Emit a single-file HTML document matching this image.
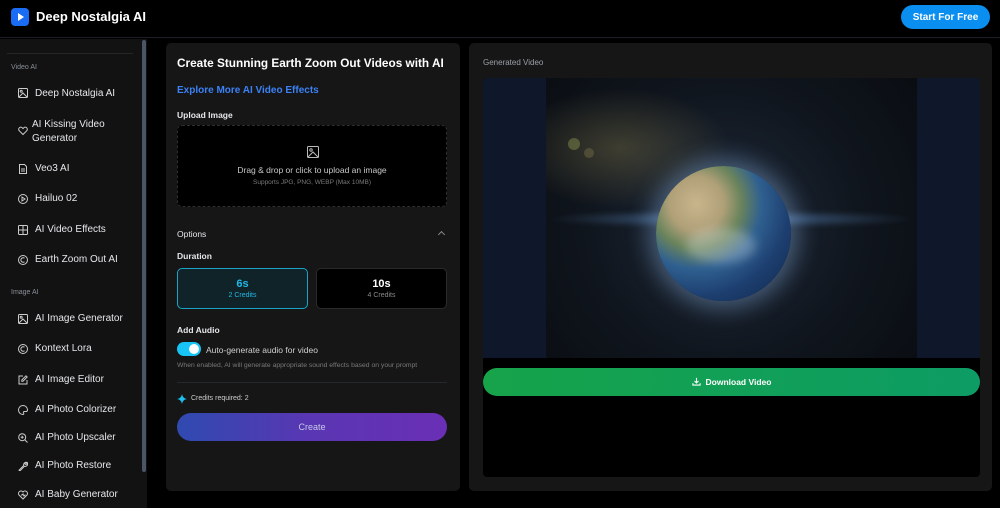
<!DOCTYPE html>
<html><head><meta charset="utf-8"><style>
*{margin:0;padding:0;box-sizing:border-box}
body{width:1000px;height:508px;background:#000;font-family:"Liberation Sans",sans-serif;color:#e5e7eb;overflow:hidden;position:relative}
.hdr{position:absolute;left:0;top:0;width:1000px;height:38px;background:#000;border-bottom:1px solid #1c1f26}
.logo{position:absolute;left:11px;top:8px;width:18px;height:18px;background:#1a6cf5;border-radius:4px}
.logo:after{content:"";position:absolute;left:7px;top:5px;border-left:6px solid #fff;border-top:4px solid transparent;border-bottom:4px solid transparent}
.brand{position:absolute;left:36px;top:9px;font-size:13px;font-weight:bold;color:#fff}
.start{position:absolute;left:901px;top:5px;width:89px;height:24px;border-radius:12px;background:#0a8ef0;color:#fff;font-size:10px;font-weight:bold;display:flex;align-items:center;justify-content:center}
.side{position:absolute;left:0;top:39px;width:147px;height:469px;background:#121212}
.sb{position:absolute;left:142px;top:40px;width:4px;height:432px;background:#4a5568;border-radius:2px}
.div{position:absolute;left:7px;top:53px;width:126px;height:1px;background:#262626}
.sec{position:absolute;left:11px;font-size:7px;color:#8a8f98}
.it{position:absolute;left:35px;font-size:10px;color:#e5e7eb}
.ic{position:absolute;left:18px;width:10px;height:10px}
.card{position:absolute;top:43px;height:448px;background:#161616;border-radius:5px}
.h1{position:absolute;left:177px;top:56px;font-size:11.8px;font-weight:bold;color:#fff}
.lnk{position:absolute;left:177px;top:85px;font-size:10px;color:#3b82f6;font-weight:bold}
.lbl{position:absolute;left:177px;font-size:8.5px;color:#e5e7eb;font-weight:bold}
.up{position:absolute;left:177px;top:125px;width:270px;height:82px;background:#000;border:1px dashed #2e2e2e;border-radius:5px;text-align:center}
.dur{position:absolute;top:268px;width:131px;height:41px;border-radius:5px;text-align:center}
.grad{position:absolute;left:177px;top:413px;width:270px;height:28px;border-radius:14px;background:linear-gradient(90deg,#2f4ab0,#5a36b3,#6a2fb5);color:#c7c9e8;font-size:9px;text-align:center;line-height:28px}
</style></head><body>
<div class="hdr"><div class="logo"></div><div class="brand">Deep Nostalgia AI</div><div class="start">Start For Free</div></div>
<div class="side"></div><div class="sb"></div><div class="div"></div>
<div class="sec" style="top:64px">Video AI</div>
<svg class="ic" style="top:88px" viewBox="0 0 10 10" fill="none" stroke="#ccc" stroke-width="1"><rect x="0.5" y="0.5" width="9" height="9" rx="1"/><circle cx="3.2" cy="3.2" r="1"/><path d="M1 9l4-4 4 4"/></svg>
<div class="it" style="top:88px">Deep Nostalgia AI</div>
<svg class="ic" style="top:126px" viewBox="0 0 10 10" fill="none" stroke="#ccc" stroke-width="1"><path d="M5 8.5L1.3 4.8a2 2 0 013-3L5 2.6l.7-.8a2 2 0 013 3z"/></svg>
<div class="it" style="top:118px;left:32px;line-height:14px">AI Kissing Video<br>Generator</div>
<svg class="ic" style="top:164px" viewBox="0 0 10 10" fill="none" stroke="#ccc" stroke-width="1"><path d="M1.5.5h5l2 2v7h-7z"/><path d="M3 5h4M3 7h4"/></svg>
<div class="it" style="top:163px">Veo3 AI</div>
<svg class="ic" style="top:194px" viewBox="0 0 10 10" fill="none" stroke="#ccc" stroke-width="1"><circle cx="5" cy="5" r="4.5"/><path d="M4 3v4l3-2z"/></svg>
<div class="it" style="top:193px">Hailuo 02</div>
<svg class="ic" style="top:225px" viewBox="0 0 10 10" fill="none" stroke="#ccc" stroke-width="1"><rect x="0.5" y="0.5" width="9" height="9" rx="1"/><path d="M5 .5v9M.5 5h9"/></svg>
<div class="it" style="top:224px">AI Video Effects</div>
<svg class="ic" style="top:255px" viewBox="0 0 10 10" fill="none" stroke="#ccc" stroke-width="1"><circle cx="5" cy="5" r="4.5"/><path d="M6.5 3.3a2.2 2.2 0 100 3.4"/></svg>
<div class="it" style="top:254px">Earth Zoom Out AI</div>
<div class="sec" style="top:289px">Image AI</div>
<svg class="ic" style="top:314px" viewBox="0 0 10 10" fill="none" stroke="#ccc" stroke-width="1"><rect x="0.5" y="0.5" width="9" height="9" rx="1"/><circle cx="3.2" cy="3.2" r="1"/><path d="M1 9l4-4 4 4"/></svg>
<div class="it" style="top:313px">AI Image Generator</div>
<svg class="ic" style="top:344px" viewBox="0 0 10 10" fill="none" stroke="#ccc" stroke-width="1"><circle cx="5" cy="5" r="4.5"/><path d="M6.5 3.3a2.2 2.2 0 100 3.4"/></svg>
<div class="it" style="top:343px">Kontext Lora</div>
<svg class="ic" style="top:375px" viewBox="0 0 10 10" fill="none" stroke="#ccc" stroke-width="1"><path d="M5 1H1v8h8V5"/><path d="M8 .8l1.2 1.2L5 6.2H3.8V5z"/></svg>
<div class="it" style="top:374px">AI Image Editor</div>
<svg class="ic" style="top:405px" viewBox="0 0 10 10" fill="none" stroke="#ccc" stroke-width="1"><path d="M5 .5a4.5 4.5 0 000 9c1 0 1-1 .5-1.6S5.6 6.5 6.5 6.5h1.5A1.5 1.5 0 009.5 5 4.5 4.5 0 005 .5z"/></svg>
<div class="it" style="top:404px">AI Photo Colorizer</div>
<svg class="ic" style="top:433px" viewBox="0 0 10 10" fill="none" stroke="#ccc" stroke-width="1"><circle cx="4.2" cy="4.2" r="3.5"/><path d="M6.8 6.8l2.7 2.7M4.2 2.7v3M2.7 4.2h3"/></svg>
<div class="it" style="top:432px">AI Photo Upscaler</div>
<svg class="ic" style="top:461px" viewBox="0 0 10 10" fill="none" stroke="#ccc" stroke-width="1"><path d="M9 1.5a2.5 2.5 0 00-3.3 3L1 9.2l.8.8L6.5 5.3A2.5 2.5 0 009.5 2L8 3.5 7 3 6.5 2z"/></svg>
<div class="it" style="top:460px">AI Photo Restore</div>
<svg class="ic" style="top:490px" viewBox="0 0 10 10" fill="none" stroke="#ccc" stroke-width="1"><path d="M5 9L1 5a2.3 2.3 0 014-3 2.3 2.3 0 014 3z"/><path d="M3 5h1l1-1 1 2 1-1h.5"/></svg>
<div class="it" style="top:489px">AI Baby Generator</div>

<div class="card" style="left:166px;width:294px"></div>
<div class="h1">Create Stunning Earth Zoom Out Videos with AI</div>
<div class="lnk">Explore More AI Video Effects</div>
<div class="lbl" style="top:110px">Upload Image</div>
<div class="up">
<svg style="position:absolute;left:129px;top:20px" width="12" height="12" viewBox="0 0 12 12" fill="none" stroke="#bbb" stroke-width="1"><rect x=".5" y=".5" width="11" height="11" rx="1"/><circle cx="4" cy="4" r="1.2"/><path d="M1 11l5-5 5 5"/></svg>
<div style="position:absolute;left:0;right:0;top:39px;font-size:8.5px;color:#c8c8c8">Drag &amp; drop or click to upload an image</div>
<div style="position:absolute;left:0;right:0;top:53px;font-size:6.5px;color:#7a7a7a">Supports JPG, PNG, WEBP (Max 10MB)</div>
</div>
<div class="lbl" style="top:229px;font-weight:normal">Options</div>
<div style="position:absolute;left:439px;top:232px;width:5px;height:5px;border-left:1px solid #888;border-top:1px solid #888;transform:rotate(45deg)"></div>
<div class="lbl" style="top:251px">Duration</div>
<div class="dur" style="left:177px;background:#0f2329;border:1.5px solid #1aa3c7"><div style="margin-top:9px;font-size:11px;font-weight:bold;color:#22b8e6">6s</div><div style="font-size:7px;color:#22b8e6;margin-top:2px">2 Credits</div></div>
<div class="dur" style="left:316px;background:#000;border:1px solid #2a2a2a"><div style="margin-top:9px;font-size:11px;font-weight:bold;color:#fff">10s</div><div style="font-size:7px;color:#8a8a8a;margin-top:2px">4 Credits</div></div>
<div class="lbl" style="top:325px">Add Audio</div>
<div style="position:absolute;left:177px;top:342px;width:24px;height:14px;border-radius:7px;background:#18c3f5"><div style="position:absolute;left:12px;top:2px;width:10px;height:10px;border-radius:50%;background:#fff"></div></div>
<div style="position:absolute;left:206px;top:345px;font-size:8.5px;color:#d0d0d0">Auto-generate audio for video</div>
<div style="position:absolute;left:177px;top:362px;font-size:6.8px;color:#7a7a7a">When enabled, AI will generate appropriate sound effects based on your prompt</div>
<div style="position:absolute;left:177px;top:382px;width:270px;height:1px;background:#24282e"></div>
<svg style="position:absolute;left:177px;top:394px" width="10" height="10" viewBox="0 0 10 10"><path d="M5 0Q5.6 4.4 10 5 5.6 5.6 5 10 4.4 5.6 0 5 4.4 4.4 5 0z" fill="#1ec0f0"/></svg>
<div style="position:absolute;left:191px;top:395px;font-size:7px;color:#ccc">Credits required: 2</div>
<div class="grad">Create</div>

<div class="card" style="left:469px;width:523px"></div>
<div style="position:absolute;left:483px;top:58px;font-size:8px;color:#9aa0a8">Generated Video</div>
<div style="position:absolute;left:483px;top:78px;width:497px;height:399px;background:#000;border-radius:4px;overflow:hidden">
<div style="position:absolute;left:0;top:0;width:497px;height:280px;background:#0f172a"></div>
<div style="position:absolute;left:63px;top:0;width:371px;height:280px;overflow:hidden;background:radial-gradient(ellipse 110px 60px at 20% 25%,rgba(130,120,75,.4),transparent),radial-gradient(circle at 48% 52%,#1f2a3a 0,#10161e 55%,#0a0d12 100%)">
<div style="position:absolute;left:0;top:132px;width:371px;height:18px;background:radial-gradient(ellipse 50% 50% at 50% 50%,rgba(100,150,210,.6),transparent);filter:blur(2px)"></div>
<div style="position:absolute;left:22px;top:60px;width:12px;height:12px;border-radius:50%;background:rgba(140,150,80,.45)"></div>
<div style="position:absolute;left:38px;top:70px;width:10px;height:10px;border-radius:50%;background:rgba(140,130,80,.35)"></div>
<div style="position:absolute;left:110px;top:88px;width:135px;height:135px;border-radius:50%;box-shadow:0 0 22px 8px rgba(140,180,230,.4);background:radial-gradient(circle at 30% 28%,#c9b58c 0,#b0a078 20%,#6a845c 33%,#2f6090 48%,#1d3f70 68%,#0f2548 100%)"></div>
<div style="position:absolute;left:140px;top:150px;width:70px;height:35px;border-radius:50%;background:rgba(230,235,240,.3);filter:blur(5px)"></div>
</div>
</div>
<div style="position:absolute;left:483px;top:368px;width:497px;height:28px;border-radius:14px;background:linear-gradient(90deg,#16a34a,#0d9c64);color:#fff;font-size:8.5px;font-weight:bold;text-align:center;line-height:28px">
<svg style="vertical-align:-1px;margin-right:5px" width="9" height="9" viewBox="0 0 10 10" fill="none" stroke="#fff" stroke-width="1.2"><path d="M5 1v5.5M2.8 4.5L5 6.7 7.2 4.5M1 7v2h8V7"/></svg>Download Video</div>
</body></html>
